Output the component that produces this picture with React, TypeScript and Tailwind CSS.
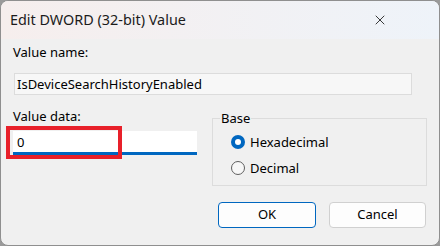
import { X } from "lucide-react";

const font = { fontFamily: '"Noto Sans", "Open Sans", sans-serif' };

function Radio({ label, checked }: { label: string; checked?: boolean }) {
  return (
    <div className="flex items-center h-[26px]">
      {checked ? (
        <span className="w-[14px] h-[14px] rounded-full bg-[#0067c0] flex items-center justify-center">
          <span className="w-[6px] h-[6px] rounded-full bg-white" />
        </span>
      ) : (
        <span className="w-[14px] h-[14px] rounded-full border border-[#5f5f5f] bg-[#f7f7f7]" />
      )}
      <span className="ml-[5px] text-[13px] text-black leading-[16px]">{label}</span>
    </div>
  );
}

export default function App() {
  return (
    <div className="w-[440px] h-[246px] bg-[#9a9a9a]" style={font}>
      <div className="w-[440px] h-[246px] rounded-[8px] border border-[#8f8f8f] bg-[#f0f0f0] overflow-hidden flex flex-col">
        {/* Title bar */}
        <div className="h-[38px] flex items-center justify-between pl-[9px] pr-[51px] bg-gradient-to-r from-[#f6eeed] to-[#eef3f9]">
          <span className="text-[14.4px] text-[#1b1b1b]">Edit DWORD (32-bit) Value</span>
          <X className="w-[16px] h-[16px] text-[#1b1b1b]" strokeWidth={1.3} />
        </div>

        <div className="flex flex-col pl-[12px] pr-[12px] pt-[5px]">
          <span className="text-[13px] leading-[16px] text-black">Value name:</span>
          <div className="mt-[13px] ml-[1px] w-[398px] h-[22px] border border-[#dcdcdc] bg-[#f7f7f7] flex items-center pl-[2px]">
            <span className="text-[13px] leading-[16px] text-black">IsDeviceSearchHistoryEnabled</span>
          </div>

          <div className="mt-[13px] flex">
            <div className="relative flex flex-col w-[184px]">
              <span className="text-[13px] leading-[16px] text-black">Value data:</span>
              <div className="mt-[7px] w-[184px] h-[24px] bg-white border-b-[3px] border-[#0067c0] flex items-center pl-[4px]">
                <span className="text-[13px] leading-[16px] text-black">0</span>
              </div>
              {/* red highlight */}
              <div className="absolute left-[-7px] top-[18px] w-[116px] h-[33px] border-[4px] border-[#e8202a]" />
            </div>

            <div className="ml-[15px] mt-[10px] w-[216px] h-[68px] border border-[#dcdcdc] relative flex flex-col pl-[18px] pt-[10px]">
              <span className="absolute left-[7px] top-[-9px] px-[1px] bg-[#f0f0f0] text-[13px] leading-[16px] text-black">Base</span>
              <Radio label="Hexadecimal" checked />
              <Radio label="Decimal" />
            </div>
          </div>

          <div className="mt-[16px] flex justify-end gap-[13px] pr-[1px]">
            <button className="w-[98px] h-[26px] rounded-[4px] border border-[#0067c0] bg-[#fdfdfd] text-[13px] text-black">
              OK
            </button>
            <button className="w-[97px] h-[26px] rounded-[4px] border border-[#d0d0d0] bg-[#fdfdfd] text-[13px] text-black">
              Cancel
            </button>
          </div>
        </div>
      </div>
    </div>
  );
}
